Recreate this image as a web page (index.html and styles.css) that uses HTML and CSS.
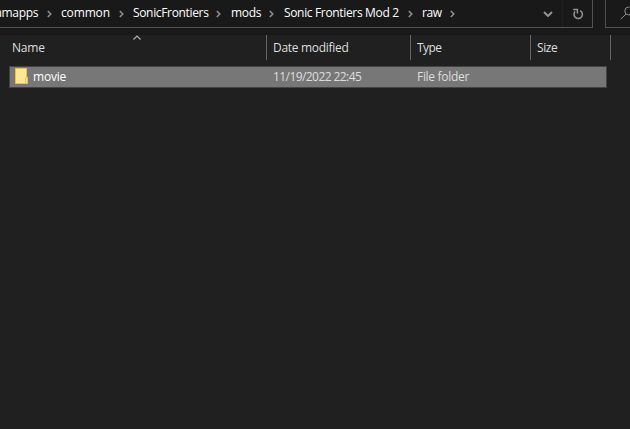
FILE: index.html
```html
<!DOCTYPE html>
<html lang="en">
<head>
<meta charset="utf-8">
<title>raw</title>
<link rel="stylesheet" href="styles.css">
</head>
<body>
<div class="toolbar">
  <nav class="address">
    <div class="crumb first"><span class="t-apps">amapps</span><svg class="chev" viewBox="0 0 5 8"><path d="M.8 1l3 3-3 3"/></svg></div>
    <div class="crumb c-common"><span class="t-common">common</span><svg class="chev" viewBox="0 0 5 8"><path d="M.8 1l3 3-3 3"/></svg></div>
    <div class="crumb c-sonic"><span class="t-sonic">SonicFrontiers</span><svg class="chev" viewBox="0 0 5 8"><path d="M.8 1l3 3-3 3"/></svg></div>
    <div class="crumb c-mods"><span class="t-mods">mods</span><svg class="chev" viewBox="0 0 5 8"><path d="M.8 1l3 3-3 3"/></svg></div>
    <div class="crumb c-mod2"><span class="t-mod2">Sonic Frontiers Mod 2</span><svg class="chev" viewBox="0 0 5 8"><path d="M.8 1l3 3-3 3"/></svg></div>
    <div class="crumb c-raw"><span class="t-raw">raw</span><svg class="chev" viewBox="0 0 5 8"><path d="M.8 1l3 3-3 3"/></svg></div>
    <svg class="drop" viewBox="0 0 10 6"><path d="M1 1l4 4 4-4"/></svg>
    <div class="refresh"><svg viewBox="0 0 12 12"><path d="M8.2 2.6A4.2 4.2 0 1 1 3 3.6"/><path d="M1.2 1.4h4.2v4.2"/></svg></div>
  </nav>
  <div class="search"><svg viewBox="0 0 14 14"><circle cx="8.8" cy="5" r="4"/><path d="M6 8L.8 13"/></svg></div>
</div>
<main class="list">
  <div class="header">
    <div class="col name"><span class="t-name">Name</span><svg class="sort" viewBox="0 0 8 5"><path d="M.5 4.5L4 1l3.5 3.5"/></svg></div>
    <div class="col date"><span class="t-date">Date modified</span></div>
    <div class="col type"><span class="t-type">Type</span></div>
    <div class="col size"><span class="t-size">Size</span></div>
  </div>
  <div class="row">
    <div class="cell file">
      <svg class="folder" viewBox="0 0 13 16"><path class="back" d="M.5.5h11v15H.5z"/><path class="tab" d="M10.5 15.5V10l2-1v6.5z"/></svg>
      <span class="t-movie">movie</span>
    </div>
    <div class="cell when"><span class="t-when">11/19/2022 22:45</span></div>
    <div class="cell kind"><span class="t-kind">File folder</span></div>
  </div>
</main>
</body>
</html>
```
FILE: styles.css
```css
* { box-sizing: border-box; }
body {
  margin: 0;
  width: 630px;
  height: 429px;
  overflow: hidden;
  background: #202020;
  color: #fff;
  font: 12px/16px "Open Sans", "Noto Sans", sans-serif;
  white-space: nowrap;
}
svg { display: block; flex: none; fill: none; }
.toolbar { display: flex; height: 35px; background: #191919; }
.address {
  display: flex;
  width: 593px;
  height: 28px;
  border: solid #535353;
  border-width: 0 1px 1px 0;
}
.crumb {
  display: flex;
  justify-content: space-between;
  align-items: center;
  height: 26px;
  padding-right: 9px;
}
.first { width: 61px; justify-content: flex-end; gap: 9px; }
.c-common { width: 72px; }
.c-sonic { width: 98px; padding-right: 10px; }
.c-mods { width: 53px; padding-right: 10px; }
.c-mod2 { width: 138px; }
.c-raw { width: 33px; padding-right: 0; }
.t-apps { letter-spacing: -.35px; }
.t-common { letter-spacing: -.15px; }
.t-sonic, .t-mod2 { letter-spacing: -.34px; }
.t-mods { letter-spacing: -.3px; }
.t-raw { letter-spacing: -.4px; }
.t-name { letter-spacing: -.2px; }
.t-date { letter-spacing: -.3px; }
.t-type { letter-spacing: -.6px; }
.t-size { letter-spacing: -.4px; }
.t-movie { letter-spacing: -.2px; }
.t-when { letter-spacing: -.57px; }
.t-kind { letter-spacing: -.3px; }
.chev { width: 5px; height: 8px; margin-top: 1px; stroke: #929292; stroke-width: 1.5; }
.drop { width: 10px; height: 6px; margin: 11px 9px 0 88px; stroke: #929292; stroke-width: 2; }
.refresh { width: 30px; height: 27px; padding: 8px 0 0 9px; border-left: 1px solid #202020; }
.refresh svg { width: 12px; height: 12px; stroke: #929292; stroke-width: 1.5; }
.search {
  width: 25px;
  height: 28px;
  margin-left: 12px;
  padding: 6px 0 0 14px;
  overflow: hidden;
  border: solid #535353;
  border-width: 0 0 1px 1px;
}
.search svg { width: 14px; height: 14px; stroke: #8c8c8c; }
.header { display: flex; height: 25px; }
.col { border-right: 1px solid #636363; padding: 5px 0 0 6px; color: #dedede; }
.name { display: flex; justify-content: space-between; width: 267px; padding: 5px 125px 0 12px; }
.date { width: 144px; }
.type { width: 120px; }
.size { width: 80px; }
.sort { width: 8px; height: 5px; margin-top: -5px; stroke: #b0b0b0; stroke-width: 1.2; }
.row {
  display: flex;
  align-items: center;
  width: 598px;
  height: 22px;
  margin: 6px 0 0 9px;
  border: 1px solid #434343;
  background: #777;
}
.file { display: flex; align-items: center; width: 263px; padding-left: 5px; gap: 5px; }
.when { width: 144px; color: #dedede; }
.kind { color: #dedede; }
.folder { width: 13px; height: 16px; margin-top: -2px; }
.back { fill: #ffe694; stroke: #e8c34b; }
.tab { fill: #ffe694; stroke: #e8c34b; }
```
